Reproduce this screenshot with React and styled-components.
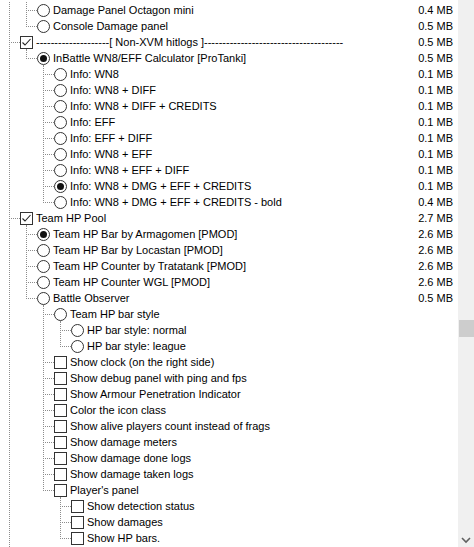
import React from "react";
import styled, { createGlobalStyle } from "styled-components";

const Global = createGlobalStyle`
  html, body { margin: 0; padding: 0; background: #fff; }
  body { overflow: hidden; }
`;

const STEP = 17;
const BASE = 3;
const LINE = "#8c8c8c";

const Frame = styled.div`
  display: flex;
  width: 474px;
  height: 547px;
  overflow: hidden;
  background: #fff;
  font-family: "Liberation Sans", Arial, sans-serif;
  font-size: 11px;
  color: #000;
`;

const List = styled.div`
  flex: 1;
  min-width: 0;
  display: flex;
  flex-direction: column;
  padding-top: 2px;
  overflow: hidden;
`;

const Row = styled.div`
  display: flex;
  align-items: center;
  height: 16px;
  flex: 0 0 16px;
  white-space: nowrap;
`;

const Label = styled.span`
  flex: 1;
  min-width: 0;
  margin-left: 3px;
  line-height: 16px;
  overflow: visible;
`;

const Size = styled.span`
  flex: 0 0 auto;
  padding-right: 5px;
  text-align: right;
  line-height: 16px;
`;

const Track = styled.div`
  flex: 0 0 16px;
  width: 16px;
  background: #f0f0f0;
  display: flex;
  flex-direction: column;
  align-items: center;
`;

const Thumb = styled.div`
  margin-top: 320px;
  width: 15px;
  height: 17px;
  background: #cdcdcd;
`;

const TrackFill = styled.div`
  flex: 1;
`;

const Arrow = styled.svg`
  display: block;
  margin-bottom: 2px;
`;

function Guides({ level, cont, last, hasNext }) {
  const w = BASE + STEP * level;
  const segs = [];
  for (let d = 0; d < level - 1; d++) {
    if (cont[d]) {
      const x = BASE + STEP * d + 6 + 0.5;
      segs.push(
        <line key={"v" + d} x1={x} y1={0} x2={x} y2={16} stroke={LINE} strokeDasharray="1 1" shapeRendering="crispEdges" />
      );
    }
  }
  const px = BASE + STEP * (level - 1) + 6 + 0.5;
  segs.push(
    <line key="c" x1={px} y1={0} x2={px} y2={hasNext ? 16 : 9} stroke={LINE} strokeDasharray="1 1" shapeRendering="crispEdges" />
  );
  segs.push(
    <line key="h" x1={px + 1.5} y1={8.5} x2={w} y2={8.5} stroke={LINE} strokeDasharray="1 1" shapeRendering="crispEdges" />
  );
  return (
    <svg width={w} height={16} style={{ flex: `0 0 ${w}px` }}>
      {segs}
    </svg>
  );
}

function Icon({ type, checked, expanded }) {
  return (
    <svg width={13} height={16} style={{ flex: "0 0 13px" }}>
      {type === "radio" ? (
        <>
          <circle cx={6.5} cy={8.5} r={6} fill="#fff" stroke="#333" strokeWidth={1} />
          {checked && <circle cx={6.5} cy={8.5} r={3.5} fill="#111" />}
        </>
      ) : (
        <>
          <rect x={0.5} y={2.5} width={12} height={12} fill="#fff" stroke="#333" strokeWidth={1} shapeRendering="crispEdges" />
          {checked && (
            <polyline points="2.5,8.5 5,11 10.5,5" fill="none" stroke="#222" strokeWidth={1.1} />
          )}
        </>
      )}
      {expanded && (
        <line x1={6.5} y1={15} x2={6.5} y2={16} stroke={LINE} shapeRendering="crispEdges" />
      )}
    </svg>
  );
}

const tree = [
  {
    hidden: true,
    children: [
      { t: "radio", label: "Damage Panel Octagon mini", size: "0.4 MB" },
      { t: "radio", label: "Console Damage panel", size: "0.5 MB" },
    ],
  },
  {
    t: "check",
    checked: true,
    label: "--------------------[ Non-XVM hitlogs ]--------------------------------------",
    size: "0.5 MB",
    children: [
      {
        t: "radio",
        checked: true,
        label: "InBattle WN8/EFF Calculator [ProTanki]",
        size: "0.5 MB",
        children: [
          { t: "radio", label: "Info: WN8", size: "0.1 MB" },
          { t: "radio", label: "Info: WN8 + DIFF", size: "0.1 MB" },
          { t: "radio", label: "Info: WN8 + DIFF + CREDITS", size: "0.1 MB" },
          { t: "radio", label: "Info: EFF", size: "0.1 MB" },
          { t: "radio", label: "Info: EFF + DIFF", size: "0.1 MB" },
          { t: "radio", label: "Info: WN8 + EFF", size: "0.1 MB" },
          { t: "radio", label: "Info: WN8 + EFF + DIFF", size: "0.1 MB" },
          { t: "radio", checked: true, label: "Info: WN8 + DMG + EFF + CREDITS", size: "0.1 MB" },
          { t: "radio", label: "Info: WN8 + DMG + EFF + CREDITS - bold", size: "0.4 MB" },
        ],
      },
    ],
  },
  {
    t: "check",
    checked: true,
    label: "Team HP Pool",
    size: "2.7 MB",
    children: [
      { t: "radio", checked: true, label: "Team HP Bar by Armagomen [PMOD]", size: "2.6 MB" },
      { t: "radio", label: "Team HP Bar by Locastan [PMOD]", size: "2.6 MB" },
      { t: "radio", label: "Team HP Counter by Tratatank [PMOD]", size: "2.6 MB" },
      { t: "radio", label: "Team HP Counter WGL [PMOD]", size: "2.6 MB" },
      {
        t: "radio",
        label: "Battle Observer",
        size: "0.5 MB",
        children: [
          {
            t: "radio",
            label: "Team HP bar style",
            children: [
              { t: "radio", label: "HP bar style: normal" },
              { t: "radio", label: "HP bar style: league" },
            ],
          },
          { t: "check", label: "Show clock (on the right side)" },
          { t: "check", label: "Show debug panel with ping and fps" },
          { t: "check", label: "Show Armour Penetration Indicator" },
          { t: "check", label: "Color the icon class" },
          { t: "check", label: "Show alive players count instead of frags" },
          { t: "check", label: "Show damage meters" },
          { t: "check", label: "Show damage done logs" },
          { t: "check", label: "Show damage taken logs" },
          {
            t: "check",
            label: "Player's panel",
            children: [
              { t: "check", label: "Show detection status" },
              { t: "check", label: "Show damages" },
              { t: "check", label: "Show HP bars." },
            ],
          },
        ],
      },
    ],
  },
  { t: "check", label: "", size: "" },
];

function flatten(nodes, level, cont, out) {
  nodes.forEach((n, i) => {
    const hasNext = i < nodes.length - 1;
    const myCont = [...cont, hasNext];
    if (!n.hidden) {
      out.push({
        ...n,
        level,
        cont: myCont,
        hasNext,
        expanded: !!(n.children && n.children.length),
      });
    }
    if (n.children) flatten(n.children, level + 1, myCont, out);
  });
  return out;
}

const rows = flatten(tree, 1, [], []);

export default function App() {
  return (
    <>
      <Global />
      <Frame>
        <List>
          {rows.map((r, i) => (
            <Row key={i}>
              <Guides level={r.level} cont={r.cont} hasNext={r.hasNext} />
              <Icon type={r.t} checked={r.checked} expanded={r.expanded} />
              <Label>{r.label}</Label>
              {r.size ? <Size>{r.size}</Size> : null}
            </Row>
          ))}
        </List>
        <Track>
          <Thumb />
          <TrackFill />
          <Arrow width={16} height={10} viewBox="0 0 16 10">
            <polyline points="4,3 8,7 12,3" fill="none" stroke="#606060" strokeWidth={1.6} />
          </Arrow>
        </Track>
      </Frame>
    </>
  );
}
